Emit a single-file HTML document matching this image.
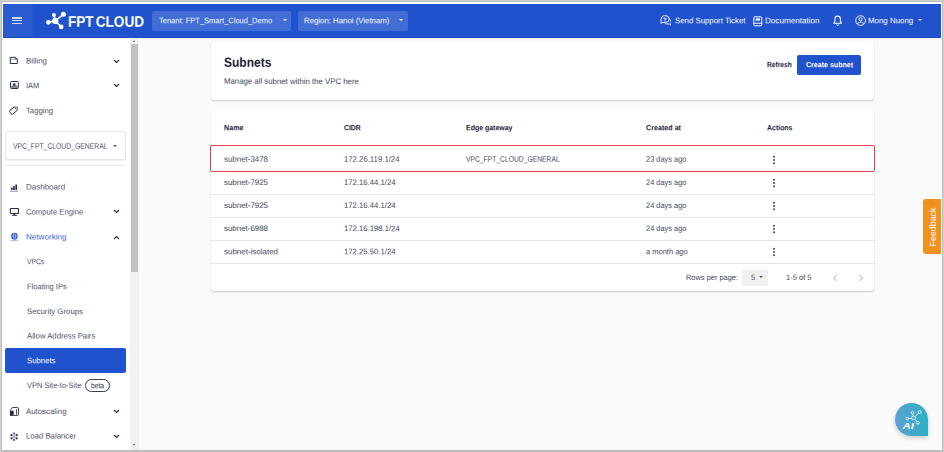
<!DOCTYPE html>
<html lang="en">
<head>
<meta charset="utf-8">
<title>Subnets - FPT Cloud</title>
<style>
*{box-sizing:border-box;margin:0;padding:0}
html,body{width:944px;height:452px;overflow:hidden;background:#d0d0d0}
body{font-family:"Liberation Sans",sans-serif;color:#2a2d45;position:relative}
.abs{position:absolute}
.t{position:absolute;white-space:nowrap;line-height:1;transform-origin:0 50%}
#fr{position:absolute;left:1px;top:1px;width:942px;height:451px;background:#bdbdbd}
#wbg{position:absolute;left:1.9px;top:1.75px;width:940.1px;height:447.85px;background:#fff}
#win{position:absolute;left:2px;top:2px;width:940px;height:447.6px;overflow:hidden}
#hdr{position:absolute;left:1px;top:1.9px;width:938px;height:33.4px;background:#1f52cc}
#ham{position:absolute;left:1px;top:1.9px;width:30.4px;height:33.4px;background:#2a5bcf}
#ham i{position:absolute;left:9.2px;width:10.1px;height:1.5px;background:#cdd9f5}
.dd{background:#3e69d3;border-radius:2px}
.hw{color:#fff}
#side{position:absolute;left:1px;top:35.5px;width:127.3px;height:412.5px;background:#fff}
#sbar{position:absolute;left:128.3px;top:35.5px;width:8.5px;height:412.5px;background:#f1f1f1}
#sthumb{position:absolute;left:0.7px;top:6.5px;width:7px;height:228.3px;background:#c1c1c1}
#main{position:absolute;left:136.8px;top:35.5px;width:803.2px;height:412.5px;background:#fafafa}
.card{background:#fff;border-radius:3px;box-shadow:0 1px 1.6px rgba(0,0,0,.2),0 0 1px rgba(0,0,0,.05)}
.sb{color:#4f516b}
.th{font-weight:bold;color:#22253d}
.td{color:#44475d}
.ft{color:#44465a}
.dots i{display:block;width:1.7px;height:1.7px;border-radius:50%;background:#33364e;margin-bottom:1.65px}
</style>
</head>
<body>
<div id="fr"></div><div id="wbg"></div>
<div id="win">
<div id="hdr"></div>
<div class="abs" style="left:1.0px;top:34.5px;width:938.0px;height:0.8px;background:#1b4bc2"></div>
<div id="ham"><i style="top:13.35px"></i><i style="top:16.1px"></i><i style="top:18.85px"></i></div>
<svg class="abs" style="left:42px;top:8px" width="24" height="22" viewBox="0 0 24 22">
  <g stroke="#fff" stroke-width="1.6" stroke-linecap="round">
    <line x1="11.3" y1="10.9" x2="4.3" y2="12.3"/><line x1="11.3" y1="10.9" x2="9.9" y2="5"/>
    <line x1="11.3" y1="10.9" x2="19.4" y2="4.3"/><line x1="11.3" y1="10.9" x2="17.2" y2="16.9"/>
  </g>
  <circle cx="11.3" cy="10.9" r="3.1" fill="#fff"/><circle cx="4.4" cy="12.3" r="2.35" fill="#fff"/>
  <circle cx="9.9" cy="5" r="2" fill="#fff"/><circle cx="19.4" cy="4.3" r="2.5" fill="#fff"/>
  <circle cx="17.2" cy="16.9" r="2.35" fill="#fff"/>
</svg>
<div class="t hw" id="logo" style="left:65.6px;top:11px;font-size:15.2px;transform:translateY(0.63px) scaleX(0.895) rotate(0.03deg);font-weight:bold;word-spacing:-1.9px;">FPT CLOUD</div>
<div class="abs" style="left:150.0px;top:9.2px;width:139.0px;height:19.6px;background:#416dd5;border-radius:2px"></div>
<div class="t hw" id="ten" style="left:156.8px;top:15px;font-size:8px;transform:translateY(0.25px) scaleX(0.939) rotate(0.03deg);">Tenant: FPT_Smart_Cloud_Demo</div>
<div class="abs" style="left:280.8px;top:17.4px;border:2.7px solid transparent;border-top:2.8px solid #fff;border-bottom:0"></div>
<div class="abs" style="left:295.8px;top:9.2px;width:110.2px;height:19.6px;background:#416dd5;border-radius:2px"></div>
<div class="t hw" id="reg" style="left:302.0px;top:15px;font-size:8px;transform:translateY(0.25px) scaleX(0.976) rotate(0.03deg);">Region: Hanoi (Vietnam)</div>
<div class="abs" style="left:397.0px;top:17.4px;border:2.7px solid transparent;border-top:2.8px solid #fff;border-bottom:0"></div>
<svg class="abs" style="left:657.6px;top:12.9px" width="11.9" height="11" viewBox="0 0 13 12" fill="none" stroke="#fff" stroke-width="1">
  <path d="M4.8 0.8h1.6a3.6 3.6 0 0 1 0 7.2H3.2L1.2 9.2V4.4A3.6 3.6 0 0 1 4.8 0.8z"/>
  <path d="M10.2 4.2a3.3 3.3 0 0 1 1.9 3v3.9l-1.8-1.3H7.2a3.2 3.2 0 0 1-2-0.9"/>
</svg>
<div class="t hw" id="q" style="left:660.5px;top:15px;font-size:5.6px;transform:translateY(0.53px) rotate(0.03deg);font-weight:bold;">?</div>
<div class="t hw" id="sst" style="left:672.5px;top:15px;font-size:8px;transform:translateY(0.25px) scaleX(0.978) rotate(0.03deg);">Send Support Ticket</div>
<svg class="abs" style="left:751px;top:13.5px" width="10" height="11" viewBox="0 0 10 11" fill="none" stroke="#fff" stroke-width="1">
  <rect x="0.8" y="0.8" width="8" height="9" rx="1"/><line x1="0.8" y1="7.2" x2="8.8" y2="7.2"/>
  <rect x="2.6" y="2.4" width="4.4" height="2.2" fill="#fff" stroke="none"/>
</svg>
<div class="t hw" id="doc" style="left:762.5px;top:15px;font-size:8px;transform:translateY(0.25px) scaleX(1.013) rotate(0.03deg);">Documentation</div>
<svg class="abs" style="left:830.8px;top:12.6px" width="9.3" height="11.2" viewBox="0 0 10 12" fill="none" stroke="#fff" stroke-width="1.1" stroke-linejoin="round">
  <path d="M5 1.2a2.9 2.9 0 0 1 2.9 2.9v2.8l1.1 1.4v0.5H1v-0.5l1.1-1.4V4.1A2.9 2.9 0 0 1 5 1.2z"/>
  <path d="M4 10.2a1 1 0 0 0 2 0" stroke-width="1"/>
</svg>
<svg class="abs" style="left:852.6px;top:13.1px" width="11.2" height="11.2" viewBox="0 0 12 12" fill="none" stroke="#fff" stroke-width="1">
  <circle cx="6" cy="6" r="5.2"/><circle cx="6" cy="4.6" r="1.7"/>
  <path d="M2.6 9.6c0.7-1.5 2-2 3.4-2s2.7 0.5 3.4 2"/>
</svg>
<div class="t hw" id="usr" style="left:866.0px;top:15px;font-size:8px;transform:translateY(0.25px) scaleX(0.987) rotate(0.03deg);">Mong Nuong</div>
<div class="abs" style="left:915.5px;top:17.4px;border:2.7px solid transparent;border-top:2.8px solid #fff;border-bottom:0"></div>
<div id="side"></div>
<div id="sbar"><div id="sthumb"></div><div class="abs" style="left:2.4px;top:2px;border:1.9px solid transparent;border-bottom:2.2px solid #606060;border-top:0"></div><div class="abs" style="left:2.4px;top:406.6px;border:1.9px solid transparent;border-top:2.2px solid #505050;border-bottom:0"></div></div>
<div class="t sb" id="s1" style="left:23.9px;top:55px;font-size:8px;transform:translateY(0.60px) scaleX(0.984) rotate(0.03deg);">Billing</div>
<svg class="abs" style="left:111.0px;top:56.5px" width="7" height="5" viewBox="0 0 7 5" fill="none" stroke="#2a2d45" stroke-width="1.15"><path d="M1 1l2.5 2.5L6 1"/></svg>
<div class="t sb" id="s2" style="left:23.9px;top:80px;font-size:8px;transform:translateY(0.25px) scaleX(0.934) rotate(0.03deg);">IAM</div>
<svg class="abs" style="left:111.0px;top:81.0px" width="7" height="5" viewBox="0 0 7 5" fill="none" stroke="#2a2d45" stroke-width="1.15"><path d="M1 1l2.5 2.5L6 1"/></svg>
<div class="t sb" id="s3" style="left:23.9px;top:105px;font-size:8px;transform:translateY(0.30px) scaleX(0.967) rotate(0.03deg);">Tagging</div>
<div class="abs" style="left:3.2px;top:129.3px;width:120.5px;height:29.1px;border:1px solid #e6e7ee;border-radius:3px;background:#fff;box-shadow:0 0.5px 1px rgba(0,0,0,.06)"></div>
<div class="t sb" id="s4" style="left:11.0px;top:140px;font-size:8px;transform:translateY(0.65px) scaleX(0.850) rotate(0.03deg);">VPC_FPT_CLOUD_GENERAL</div>
<div class="abs" style="left:111.2px;top:142.9px;border:2.75px solid transparent;border-top:2.8px solid #555;border-bottom:0"></div>
<div class="abs" style="left:3.2px;top:163.1px;width:120.5px;height:1.0px;background:#e8e9ee"></div>
<div class="t sb" id="s5" style="left:23.9px;top:181px;font-size:8px;transform:translateY(0.60px) rotate(0.03deg);">Dashboard</div>
<div class="t sb" id="s6" style="left:23.9px;top:206px;font-size:8px;transform:translateY(0.50px) scaleX(0.962) rotate(0.03deg);">Compute Engine</div>
<svg class="abs" style="left:111.0px;top:207.0px" width="7" height="5" viewBox="0 0 7 5" fill="none" stroke="#2a2d45" stroke-width="1.15"><path d="M1 1l2.5 2.5L6 1"/></svg>
<div class="t sb" id="s7" style="left:23.9px;top:231px;font-size:8px;transform:translateY(0.40px) scaleX(1.014) rotate(0.03deg);color:#3f63d6;">Networking</div>
<svg class="abs" style="left:111.0px;top:232.5px" width="7" height="5" viewBox="0 0 7 5" fill="none" stroke="#2a2d45" stroke-width="1.15"><path d="M1 4l2.5-2.5L6 4"/></svg>
<div class="t sb" id="s8" style="left:25.0px;top:256px;font-size:8px;transform:translateY(0.30px) scaleX(0.843) rotate(0.03deg);">VPCs</div>
<div class="t sb" id="s9" style="left:25.0px;top:281px;font-size:8px;transform:translateY(0.20px) scaleX(0.941) rotate(0.03deg);">Floating IPs</div>
<div class="t sb" id="s10" style="left:25.0px;top:306px;font-size:8px;transform:translateY(0.10px) scaleX(0.976) rotate(0.03deg);">Security Groups</div>
<div class="t sb" id="s11" style="left:25.0px;top:330px;font-size:8px;transform:translateY(0.55px) scaleX(0.966) rotate(0.03deg);">Allow Address Pairs</div>
<div class="abs" style="left:3.2px;top:346.3px;width:120.8px;height:25.1px;background:#1f52cc;border-radius:2px"></div>
<div class="t sb" id="s12" style="left:25.0px;top:355px;font-size:8px;transform:translateY(0.35px) scaleX(0.971) rotate(0.03deg);color:#fff;">Subnets</div>
<div class="t sb" id="s13" style="left:25.0px;top:380px;font-size:8px;transform:translateY(0.05px) scaleX(0.934) rotate(0.03deg);">VPN Site-to-Site</div>
<div class="abs" style="left:83.2px;top:377.3px;width:24.5px;height:13.2px;border:1px solid #3a3d5a;border-radius:6.3px"></div>
<div class="t sb" id="s14" style="left:88.9px;top:380px;font-size:8px;transform:translateY(0.15px) scaleX(0.841) rotate(0.03deg);color:#2a2d45;">beta</div>
<div class="t sb" id="s15" style="left:23.9px;top:406px;font-size:8px;transform:translateY(0.10px) scaleX(0.979) rotate(0.03deg);">Autoscaling</div>
<svg class="abs" style="left:111.0px;top:407.0px" width="7" height="5" viewBox="0 0 7 5" fill="none" stroke="#2a2d45" stroke-width="1.15"><path d="M1 1l2.5 2.5L6 1"/></svg>
<div class="t sb" id="s16" style="left:23.9px;top:430px;font-size:8px;transform:translateY(0.60px) scaleX(0.971) rotate(0.03deg);">Load Balancer</div>
<svg class="abs" style="left:111.0px;top:431.5px" width="7" height="5" viewBox="0 0 7 5" fill="none" stroke="#2a2d45" stroke-width="1.15"><path d="M1 1l2.5 2.5L6 1"/></svg>
<div id="main"></div>
<div class="abs card" style="left:208.6px;top:40.0px;width:663.8px;height:58.4px;"></div>
<div class="t " id="m1" style="left:221.6px;top:53px;font-size:13.1px;transform:translateY(0.81px) scaleX(0.916) rotate(0.03deg);font-weight:bold;color:#1d2038;">Subnets</div>
<div class="t sb" id="m2" style="left:221.6px;top:75px;font-size:8px;transform:translateY(0.85px) scaleX(0.975) rotate(0.03deg);color:#3c3f58;">Manage all subnet within the VPC here</div>
<div class="t th" id="m3" style="left:765.0px;top:59px;font-size:7.7px;transform:translateY(0.35px) scaleX(0.866) rotate(0.03deg);">Refresh</div>
<div class="abs" style="left:795.1px;top:53.4px;width:64.0px;height:19.3px;background:#1f52cc;border-radius:2px"></div>
<div class="t th" id="m4" style="left:803.8px;top:59px;font-size:7.7px;transform:translateY(0.35px) scaleX(0.917) rotate(0.03deg);color:#fff;">Create subnet</div>
<div class="abs card" style="left:208.6px;top:107.0px;width:663.8px;height:182.2px;"></div>
<div class="t th" id="h0" style="left:221.5px;top:122px;font-size:7.7px;transform:translateY(0.35px) scaleX(0.930) rotate(0.03deg);">Name</div>
<div class="t th" id="h1" style="left:342.0px;top:122px;font-size:7.7px;transform:translateY(0.35px) scaleX(0.891) rotate(0.03deg);">CIDR</div>
<div class="t th" id="h2" style="left:464.0px;top:122px;font-size:7.7px;transform:translateY(0.35px) scaleX(0.907) rotate(0.03deg);">Edge gateway</div>
<div class="t th" id="h3" style="left:644.0px;top:122px;font-size:7.7px;transform:translateY(0.35px) scaleX(0.931) rotate(0.03deg);">Created at</div>
<div class="t th" id="h4" style="left:764.5px;top:122px;font-size:7.7px;transform:translateY(0.35px) scaleX(0.904) rotate(0.03deg);">Actions</div>
<div class="t td" id="r0c0" style="left:221.5px;top:153px;font-size:8px;transform:translateY(0.80px) scaleX(0.989) rotate(0.03deg);">subnet-3478</div>
<div class="t td" id="r0c1" style="left:342.0px;top:153px;font-size:8px;transform:translateY(0.80px) scaleX(0.969) rotate(0.03deg);">172.26.119.1/24</div>
<div class="t td" id="r0c2" style="left:464.0px;top:153px;font-size:8px;transform:translateY(0.80px) scaleX(0.843) rotate(0.03deg);">VPC_FPT_CLOUD_GENERAL</div>
<div class="t td" id="r0c3" style="left:644.0px;top:153px;font-size:8px;transform:translateY(0.80px) scaleX(0.929) rotate(0.03deg);">23 days ago</div>
<svg class="abs" style="left:770.05px;top:151.90px" width="4" height="12" viewBox="0 0 4 12" fill="#3f4149"><circle cx="2" cy="2.7" r="0.97"/><circle cx="2" cy="6" r="0.97"/><circle cx="2" cy="9.3" r="0.97"/></svg>
<div class="t td" id="r1c0" style="left:221.5px;top:176px;font-size:8px;transform:translateY(0.90px) scaleX(0.989) rotate(0.03deg);">subnet-7925</div>
<div class="t td" id="r1c1" style="left:342.0px;top:176px;font-size:8px;transform:translateY(0.90px) scaleX(0.965) rotate(0.03deg);">172.16.44.1/24</div>
<div class="t td" id="r1c3" style="left:644.0px;top:176px;font-size:8px;transform:translateY(0.90px) scaleX(0.929) rotate(0.03deg);">24 days ago</div>
<svg class="abs" style="left:770.05px;top:175.00px" width="4" height="12" viewBox="0 0 4 12" fill="#3f4149"><circle cx="2" cy="2.7" r="0.97"/><circle cx="2" cy="6" r="0.97"/><circle cx="2" cy="9.3" r="0.97"/></svg>
<div class="t td" id="r2c0" style="left:221.5px;top:200px;font-size:8px;transform:translateY(0.00px) scaleX(0.989) rotate(0.03deg);">subnet-7925</div>
<div class="t td" id="r2c1" style="left:342.0px;top:200px;font-size:8px;transform:translateY(0.00px) scaleX(0.965) rotate(0.03deg);">172.16.44.1/24</div>
<div class="t td" id="r2c3" style="left:644.0px;top:200px;font-size:8px;transform:translateY(0.00px) scaleX(0.929) rotate(0.03deg);">24 days ago</div>
<svg class="abs" style="left:770.05px;top:198.10px" width="4" height="12" viewBox="0 0 4 12" fill="#3f4149"><circle cx="2" cy="2.7" r="0.97"/><circle cx="2" cy="6" r="0.97"/><circle cx="2" cy="9.3" r="0.97"/></svg>
<div class="t td" id="r3c0" style="left:221.5px;top:223px;font-size:8px;transform:translateY(0.10px) scaleX(0.989) rotate(0.03deg);">subnet-6988</div>
<div class="t td" id="r3c1" style="left:342.0px;top:223px;font-size:8px;transform:translateY(0.10px) scaleX(0.963) rotate(0.03deg);">172.16.198.1/24</div>
<div class="t td" id="r3c3" style="left:644.0px;top:223px;font-size:8px;transform:translateY(0.10px) scaleX(0.929) rotate(0.03deg);">24 days ago</div>
<svg class="abs" style="left:770.05px;top:221.20px" width="4" height="12" viewBox="0 0 4 12" fill="#3f4149"><circle cx="2" cy="2.7" r="0.97"/><circle cx="2" cy="6" r="0.97"/><circle cx="2" cy="9.3" r="0.97"/></svg>
<div class="t td" id="r4c0" style="left:221.5px;top:246px;font-size:8px;transform:translateY(0.20px) scaleX(0.995) rotate(0.03deg);">subnet-isolated</div>
<div class="t td" id="r4c1" style="left:342.0px;top:246px;font-size:8px;transform:translateY(0.20px) scaleX(0.965) rotate(0.03deg);">172.25.50.1/24</div>
<div class="t td" id="r4c3" style="left:644.0px;top:246px;font-size:8px;transform:translateY(0.20px) scaleX(0.938) rotate(0.03deg);">a month ago</div>
<svg class="abs" style="left:770.05px;top:244.30px" width="4" height="12" viewBox="0 0 4 12" fill="#3f4149"><circle cx="2" cy="2.7" r="0.97"/><circle cx="2" cy="6" r="0.97"/><circle cx="2" cy="9.3" r="0.97"/></svg>
<div class="abs" style="left:208.5px;top:191.5px;width:664.0px;height:1.0px;background:#e4e4e8"></div>
<div class="abs" style="left:208.5px;top:214.6px;width:664.0px;height:1.0px;background:#e4e4e8"></div>
<div class="abs" style="left:208.5px;top:237.9px;width:664.0px;height:1.0px;background:#e4e4e8"></div>
<div class="abs" style="left:208.5px;top:260.8px;width:664.0px;height:1.0px;background:#e4e4e8"></div>
<div class="abs" style="left:208.3px;top:143.3px;width:664.7px;height:26.6px;border:1.5px solid #e3414a;border-radius:2px"></div>
<div class="t td ft" id="f1" style="left:684.0px;top:272px;font-size:7.7px;transform:translateY(0.05px) scaleX(0.966) rotate(0.03deg);">Rows per page:</div>
<div class="abs" style="left:740.2px;top:267.5px;width:25.8px;height:16.0px;background:#f0f0f0"></div>
<div class="t td ft" id="f2" style="left:749.0px;top:272px;font-size:7.7px;transform:translateY(0.05px) rotate(0.03deg);">5</div>
<div class="abs" style="left:757.2px;top:274.3px;border:2.75px solid transparent;border-top:2.8px solid #555;border-bottom:0"></div>
<div class="t td ft" id="f3" style="left:783.5px;top:272px;font-size:7.7px;transform:translateY(0.05px) scaleX(0.978) rotate(0.03deg);">1-5 of 5</div>
<svg class="abs" style="left:829.5px;top:271.5px" width="6" height="8" viewBox="0 0 6 8" fill="none" stroke="#a6a6ad" stroke-width="0.9"><path d="M4.9 1.1L1.6 4l3.3 2.9"/></svg>
<svg class="abs" style="left:855.5px;top:271.5px" width="6" height="8" viewBox="0 0 6 8" fill="none" stroke="#a6a6ad" stroke-width="0.9"><path d="M1.3 1.1L4.6 4L1.3 6.9"/></svg>
<div class="abs" style="left:920.8px;top:197.3px;width:18.2px;height:54.5px;background:#f0911f;border-radius:3px 0 0 3px"></div>
<div class="t" id="fbk" style="left:930.8px;top:224.8px;font-size:8.9px;color:#fff;transform:translate(-50%,-50%) rotate(-90deg);transform-origin:50% 50%">Feedback</div>
<div class="abs" style="left:892.6px;top:400.9px;width:33.6px;height:33.6px;border-radius:17px 17px 0 17px;background:linear-gradient(90deg,#5e9fd2,#2bb1c5);box-shadow:0 2px 5px rgba(0,0,0,.18)"></div>
<svg class="abs" style="left:892.6px;top:400.9px" width="33.6" height="33.6" viewBox="0 0 33.6 33.6">
  <g stroke="#fff" stroke-width="0.75" fill="none">
    <line x1="18.6" y1="15" x2="13.6" y2="15.6"/><line x1="18.6" y1="15" x2="17.7" y2="10.9"/>
    <line x1="18.6" y1="15" x2="23.8" y2="10"/><line x1="18.6" y1="15" x2="22.2" y2="19"/>
    <circle cx="18.6" cy="15" r="1.9" fill="#48a6cc"/><circle cx="12.3" cy="15.7" r="1.3"/><circle cx="17.5" cy="9.7" r="1.25"/>
    <circle cx="24.8" cy="9" r="1.55"/><circle cx="23" cy="19.9" r="1.35"/>
  </g>
  <text x="7.6" y="25.7" font-family="Liberation Sans, sans-serif" font-size="8.8" font-weight="bold" font-style="italic" fill="#fff" textLength="11.4" lengthAdjust="spacingAndGlyphs">AI</text>
</svg>
<svg class="abs" style="left:6.00px;top:53.00px" width="12" height="11" viewBox="8 55 12 11"><path d="M10.3 57.3H15.5L17.3 59.2V63.5H10.3z" fill="none" stroke="#2a2d45" stroke-width="1" stroke-linejoin="round"/><path d="M11 59.1h4.6" stroke="#b9bbc8" stroke-width="1.2"/><path d="M15.3 57.4v2h2" fill="none" stroke="#2a2d45" stroke-width="0.6"/></svg>
<svg class="abs" style="left:6.00px;top:77.00px" width="13" height="12" viewBox="8 79 13 12"><rect x="10.5" y="81.5" width="7.8" height="7" rx="1" fill="none" stroke="#2a2d45" stroke-width="1"/><path d="M11.6 87c0.2-2.4 1.4-3.6 2.8-3.6s2.6 1.2 2.8 3.6z" fill="#9a9cb0"/><circle cx="14.3" cy="84.4" r="1.15" fill="#2a2d45"/><rect x="11" y="86.6" width="6.8" height="0.9" fill="#2a2d45"/></svg>
<svg class="abs" style="left:6.00px;top:102.00px" width="13" height="12" viewBox="8 104 13 12"><g transform="rotate(-41 14 110)"><path d="M10.8 107.7H15.9L18.4 110L15.9 112.3H10.8a1.3 1.3 0 0 1-1.3-1.3V109a1.3 1.3 0 0 1 1.3-1.3z" fill="none" stroke="#3d405c" stroke-width="0.95" stroke-linejoin="round"/><circle cx="16" cy="110" r="0.6" fill="#3d405c"/></g></svg>
<svg class="abs" style="left:6.00px;top:180.00px" width="13" height="12" viewBox="8 182 13 12"><rect x="10.9" y="187.4" width="1.6" height="2.7" fill="#2a2d45"/><rect x="13.1" y="186.1" width="1.7" height="4" fill="#2a2d45"/><rect x="15.4" y="184.5" width="1.6" height="5.6" fill="#2a2d45"/><rect x="10" y="190.9" width="8" height="0.7" fill="#7c7e94"/></svg>
<svg class="abs" style="left:6.00px;top:204.00px" width="13" height="12" viewBox="8 206 13 12"><rect x="10.35" y="208.5" width="8.1" height="5" rx="0.7" fill="none" stroke="#2a2d45" stroke-width="1.1"/><rect x="13.6" y="213.6" width="1.6" height="1.5" fill="#2a2d45"/><rect x="11.8" y="214.9" width="5.2" height="0.9" fill="#2a2d45"/></svg>
<svg class="abs" style="left:6.00px;top:228.00px" width="13" height="13" viewBox="8 230 13 13"><circle cx="14.4" cy="236.2" r="3.4" fill="#3560d8"/><ellipse cx="14.4" cy="236.2" rx="1.2" ry="3.1" fill="none" stroke="#dfe6fa" stroke-width="0.5"/><path d="M11.2 236.2h6.4" stroke="#dfe6fa" stroke-width="0.5"/><rect x="13.9" y="239.4" width="1" height="1.2" fill="#3560d8"/><rect x="10.2" y="240.3" width="8.2" height="0.7" fill="#93a8ea"/></svg>
<svg class="abs" style="left:6.00px;top:403.00px" width="13" height="13" viewBox="8 405 13 13"><path d="M12.3 407.5h5.4a0.8 0.8 0 0 1 0.8 0.8v6.4a0.8 0.8 0 0 1-0.8 0.8h-4" fill="none" stroke="#44465f" stroke-width="1"/><path d="M10.3 410.6L12.4 407.5" stroke="#44465f" stroke-width="1"/><rect x="9.9" y="410.7" width="3.8" height="5.2" fill="#2a2d45"/><rect x="16" y="409.3" width="1" height="5.4" fill="#4a4c66"/><rect x="14.2" y="410.6" width="1.2" height="4.3" fill="#fff"/></svg>
<svg class="abs" style="left:6.00px;top:428.00px" width="13" height="13" viewBox="8 430 13 13"><circle cx="11.5" cy="435.2" r="1.12" fill="#2a2d45"/><circle cx="16.7" cy="435.2" r="1.12" fill="#2a2d45"/><circle cx="11.5" cy="438.3" r="1.12" fill="#2a2d45"/><circle cx="16.7" cy="438.3" r="1.12" fill="#2a2d45"/><circle cx="14.1" cy="433.5" r="1.12" fill="#55577a"/><circle cx="14.1" cy="439.9" r="1.12" fill="#55577a"/><circle cx="14.1" cy="436.7" r="0.8" fill="#55577a"/><path d="M14.1 434v5.4M11.8 435.4l4.6 2.7M16.4 435.4l-4.6 2.7" stroke="#8a8ca2" stroke-width="0.5"/></svg>
</div>
</body>
</html>
